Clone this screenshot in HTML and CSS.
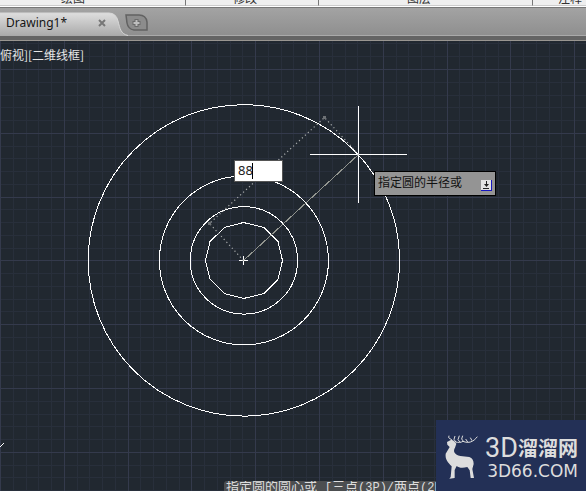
FILE: index.html
```html
<!DOCTYPE html>
<html lang="zh-CN">
<head>
<meta charset="utf-8">
<title>Drawing1</title>
<link rel="stylesheet" href="styles.css">
</head>
<body>
<header class="ribbon">
  <div class="panel draw">绘图</div>
  <div class="panel modify">修改</div>
  <div class="panel layers">图层</div>
  <div class="panel notes">注释</div>
</header>
<nav class="tabs">
  <div class="tab">
    <svg class="tab-shape" viewBox="0 0 128 24" aria-hidden="true">
      <defs><linearGradient id="tabFill" x2="0" y2="1"><stop stop-color="#dedede"/><stop offset="1" stop-color="#a9a9a9"/></linearGradient></defs>
      <path d="M0 24V1H109Q116 1 118 9C120 17 121 22 128 24Z" fill="url(#tabFill)"/>
      <path d="M0 1H109Q116 1 118 9C120 17 121 22 128 23.500" fill="none" stroke="#d8d8d8"/>
    </svg>
    <a class="tab-name" href="#drawing">Drawing1*</a>
    <button class="close" aria-label="关闭"><svg width="8" height="8" viewBox="0 0 8 8"><path d="M1 1L7 7M7 1L1 7" stroke="#777" stroke-width="2"/></svg></button>
  </div>
  <button class="add" aria-label="新建"><svg width="24" height="17" viewBox="0 0 24 17"><path d="M1 1H14Q21 1 22 8V16H9Q3 15 2 9Z" fill="#8c8c8c" stroke="#626262" stroke-width="1.500"/><path d="M11.500 5V13M7.500 9H15.500" stroke="#6b6b6b" stroke-width="4"/><path d="M11.500 6V12M8.500 9H14.500" stroke="#bebebe" stroke-width="2"/></svg></button>
</nav>
<main class="canvas" id="drawing">
  <svg class="drawing" viewBox="0 41 586 450" preserveAspectRatio="xMinYMin slice" aria-hidden="true">
    <path id="minor" stroke="#282f3b"/>
    <path id="major" stroke="#343a4c"/>
    <g fill="none" stroke="#fff" shape-rendering="crispEdges">
      <circle cx="243.900" cy="260.400" r="155.700"/>
      <circle cx="243.900" cy="260.400" r="84.500"/>
      <circle cx="243.900" cy="260.400" r="53.700"/>
      <path d="M243.500 222.500L264 227.500L278 241.500L282.500 260.500L278 279.500L264 293.500L243.500 298.500L224.500 293.500L210 279L205.500 260.500L210 241.500L224.500 227.500Z"/>
      <path d="M239 260.500H248M243.500 256V265M310 154.500H407M358.500 106V203M0 447L4 443"/>
    </g>
    <path d="M243.500 260.500L358.500 154.500" stroke="#92958f" shape-rendering="crispEdges"/>
    <path d="M243.500 260.500L209.500 223.500L324.500 117.500L358.500 154.500" fill="none" stroke="#a8abac" stroke-width="1.200" stroke-dasharray="1.200 2.800"/>
    <path d="M208 222h3v3h-3zM323 116h3v3h-3z" fill="#6d7174"/>
  </svg>
  <div class="view-label">俯视][二维线框]</div>
  <input class="radius" aria-label="半径" value="88">
  <span class="caret"></span>
  <div class="prompt"><span>指定圆的半径或</span>
    <svg width="11" height="11" viewBox="0 0 11 11" aria-hidden="true"><path d="M0 0H11V11H0Z" fill="#1515c0"/><path d="M0 0H10V10H0Z" fill="#e4e4e4"/><path d="M5.500 1V6M2 8.500H8" stroke="#222"/><path d="M3 4H8L5.500 7Z" fill="#222"/></svg>
  </div>
  <div class="command">指定圆的圆心或 <span class="latin">[</span>三点<span class="latin">(3P)/</span>两点<span class="latin">(2P)</span></div>
  <aside class="brand">
    <svg class="deer" width="35" height="46" viewBox="45 55 105 138" aria-hidden="true"><path d="M51 79L64 72L71 75L79 84L75 96C68 107 74 117 91 121L118 124Q131 129 131 145L127 160L132 187H122L119 164L112 154C98 158 87 157 80 151L74 163V187L58 189L62 184L65 152C54 140 45 132 47 114L59 94L52 87Z" fill="#ddd"/><path d="M67 74L56 66L57 60M74 78C86 82 94 80 99 77C116 84 130 79 142 63M78 80L72 71L75 61M91 80L84 72L88 60M101 78L95 70L98 60M113 79L107 70M126 75L121 66" fill="none" stroke="#ddd" stroke-width="3"/></svg>
    <div class="brand-copy"><div class="brand-name"><span>3D</span><b>溜溜网</b></div><div class="brand-url">3D66.COM</div></div>
  </aside>
</main>
<script src="grid.js"></script>
</body>
</html>
```
FILE: styles.css
```css
* { box-sizing: border-box; }
body { margin: 0; height: 100vh; display: flex; flex-direction: column; overflow: hidden; background: #212830; font: 12px "Noto Sans", "Noto Sans CJK SC", sans-serif; }
button { border: 0; padding: 0; background: none; display: flex; }
.ribbon { height: 7px; flex: none; display: grid; grid-template-columns: 186px 133px 214px 1fr; background: #efefef; border-bottom: 1px solid #fff; overflow: hidden; line-height: 12px; color: #333; }
.panel { height: 6px; display: flex; align-items: flex-end; overflow: hidden; border-right: 1px solid #777; border-bottom: 1px solid #ccc; }
.panel:last-child { border-right: 0; }
.draw { padding-left: 61px; }
.modify { padding-left: 47px; }
.layers { padding-left: 88px; }
.notes { padding-left: 25px; }
.tabs { height: 34px; flex: none; display: flex; align-items: flex-start; padding-top: 4px; border-top: 1px solid #777; background: linear-gradient(#a3a3a3 0, #8f8f8f 27px, #aaa 27px, #aaa 28px, #646464 28px, #646464 32px, #aaa69f 32px, #666 34px); }
.tab { position: relative; width: 128px; height: 24px; display: flex; align-items: center; justify-content: space-between; padding: 0 22px 2px 6px; }
.tab-shape { position: absolute; inset: 0; }
.tab-name { position: relative; font: 12px/20px "Noto Sans", sans-serif; color: #151515; text-decoration: none; }
.close { position: relative; }
.add { margin-top: 2px; margin-left: -3px; }
.canvas { position: relative; flex: 1; overflow: hidden; }
.drawing { position: absolute; inset: 0; width: 100%; height: 100%; }
.view-label { position: absolute; left: 0; top: 5px; line-height: 18px; color: #e6e6e6; font-family: "Noto Sans CJK SC", sans-serif; }
.radius { position: absolute; left: 234px; top: 119px; width: 49px; height: 22px; border: 1px solid #555; padding: 0 3px 2px; background: #fff; color: #222; font: 13px "Noto Sans", sans-serif; }
.caret { position: absolute; left: 252px; top: 122px; width: 1px; height: 16px; background: #000; }
.prompt { position: absolute; left: 374px; top: 130px; width: 122px; height: 25px; display: flex; align-items: center; justify-content: space-between; padding: 0 3px 2px; border: 1px solid #000; background: #949494; color: #111; line-height: 18px; }
.prompt svg { margin-top: 6px; }
.command { position: absolute; left: 224px; right: 150px; bottom: 0; height: 10px; padding-left: 2px; overflow: hidden; white-space: nowrap; background: #4c4e50; border-radius: 3px 0 0; color: #ddd; font: 13px/14px "Liberation Mono", "Noto Sans CJK SC", monospace; }
.latin { font-size: 12px; }
.brand { position: absolute; right: 0; bottom: 0; width: 150px; height: 71px; display: flex; gap: 4px; padding: 14px 8px 0 9px; background: #233056; color: #ddd; }
.brand-copy { flex: 1; display: flex; flex-direction: column; align-items: flex-end; white-space: nowrap; }
.brand-name { display: flex; align-items: center; height: 28px; font: 27px/28px Roboto, sans-serif; }
.brand-name b { font: bold 20px/28px "Noto Sans CJK SC", sans-serif; }
.brand-url { font: 17px/18px "DejaVu Sans", sans-serif; }
```
FILE: grid.js
```js
const step = 12.76;
let minor = "", major = "";
for (let i = 0; i < 46; i++) {
  const line = `M${Math.round(i * step) + 0.5} 41V491`;
  if (i % 5) minor += line; else major += line;
}
for (let i = -2; i < 34; i++) {
  const line = `M0 ${Math.round(69 + i * step) + 0.5}H586`;
  if (i % 5) minor += line; else major += line;
}
document.getElementById("minor").setAttribute("d", minor);
document.getElementById("major").setAttribute("d", major);
```
